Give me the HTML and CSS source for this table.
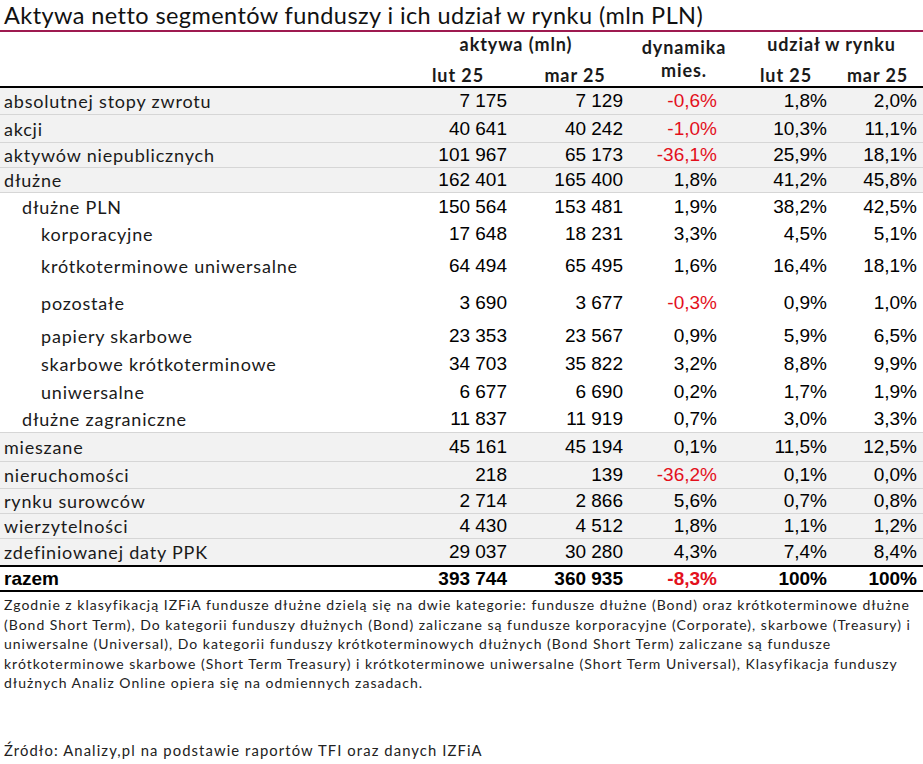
FILE: index.html
```html
<!DOCTYPE html>
<html lang="pl">
<head>
<meta charset="utf-8">
<title>Aktywa netto segmentów funduszy</title>
<link rel="stylesheet" href="styles.css">
</head>
<body>
<div class="page">
  <h1 class="title">Aktywa netto segmentów funduszy i ich udział w rynku (mln PLN)</h1>

  <div class="head">
    <div class="h-empty"></div>
    <div class="h-group h-akt">aktywa (mln)</div>
    <div class="h-dyn">dynamika<br>mies.</div>
    <div class="h-group h-udz">udział w rynku</div>
    <div class="h-sub h-lut1">lut 25</div>
    <div class="h-sub h-mar1">mar 25</div>
    <div class="h-sub h-lut2">lut 25</div>
    <div class="h-sub h-mar2">mar 25</div>
  </div>

  <div class="row grey h27"><div class="lbl">absolutnej stopy zwrotu</div><div class="c1">7 175</div><div class="c2">7 129</div><div class="c3 neg">-0,6%</div><div class="c4">1,8%</div><div class="c5">2,0%</div></div>
  <div class="row grey h28"><div class="lbl">akcji</div><div class="c1">40 641</div><div class="c2">40 242</div><div class="c3 neg">-1,0%</div><div class="c4">10,3%</div><div class="c5">11,1%</div></div>
  <div class="row grey h25"><div class="lbl">aktywów niepublicznych</div><div class="c1">101 967</div><div class="c2">65 173</div><div class="c3 neg">-36,1%</div><div class="c4">25,9%</div><div class="c5">18,1%</div></div>
  <div class="row grey h25"><div class="lbl">dłużne</div><div class="c1">162 401</div><div class="c2">165 400</div><div class="c3">1,8%</div><div class="c4">41,2%</div><div class="c5">45,8%</div></div>
  <div class="row h27"><div class="lbl ind1">dłużne PLN</div><div class="c1">150 564</div><div class="c2">153 481</div><div class="c3">1,9%</div><div class="c4">38,2%</div><div class="c5">42,5%</div></div>
  <div class="row h28"><div class="lbl ind2">korporacyjne</div><div class="c1">17 648</div><div class="c2">18 231</div><div class="c3">3,3%</div><div class="c4">4,5%</div><div class="c5">5,1%</div></div>
  <div class="row h36"><div class="lbl ind2">krótkoterminowe uniwersalne</div><div class="c1">64 494</div><div class="c2">65 495</div><div class="c3">1,6%</div><div class="c4">16,4%</div><div class="c5">18,1%</div></div>
  <div class="row h38"><div class="lbl ind2">pozostałe</div><div class="c1">3 690</div><div class="c2">3 677</div><div class="c3 neg">-0,3%</div><div class="c4">0,9%</div><div class="c5">1,0%</div></div>
  <div class="row h28"><div class="lbl ind2">papiery skarbowe</div><div class="c1">23 353</div><div class="c2">23 567</div><div class="c3">0,9%</div><div class="c4">5,9%</div><div class="c5">6,5%</div></div>
  <div class="row h28"><div class="lbl ind2">skarbowe krótkoterminowe</div><div class="c1">34 703</div><div class="c2">35 822</div><div class="c3">3,2%</div><div class="c4">8,8%</div><div class="c5">9,9%</div></div>
  <div class="row h28"><div class="lbl ind2">uniwersalne</div><div class="c1">6 677</div><div class="c2">6 690</div><div class="c3">0,2%</div><div class="c4">1,7%</div><div class="c5">1,9%</div></div>
  <div class="row h27 last-white"><div class="lbl ind1">dłużne zagraniczne</div><div class="c1">11 837</div><div class="c2">11 919</div><div class="c3">0,7%</div><div class="c4">3,0%</div><div class="c5">3,3%</div></div>
  <div class="row grey h29"><div class="lbl">mieszane</div><div class="c1">45 161</div><div class="c2">45 194</div><div class="c3">0,1%</div><div class="c4">11,5%</div><div class="c5">12,5%</div></div>
  <div class="row grey h27"><div class="lbl">nieruchomości</div><div class="c1">218</div><div class="c2">139</div><div class="c3 neg">-36,2%</div><div class="c4">0,1%</div><div class="c5">0,0%</div></div>
  <div class="row grey h25"><div class="lbl">rynku surowców</div><div class="c1">2 714</div><div class="c2">2 866</div><div class="c3">5,6%</div><div class="c4">0,7%</div><div class="c5">0,8%</div></div>
  <div class="row grey h25"><div class="lbl">wierzytelności</div><div class="c1">4 430</div><div class="c2">4 512</div><div class="c3">1,8%</div><div class="c4">1,1%</div><div class="c5">1,2%</div></div>
  <div class="row grey h26 no-border"><div class="lbl">zdefiniowanej daty PPK</div><div class="c1">29 037</div><div class="c2">30 280</div><div class="c3">4,3%</div><div class="c4">7,4%</div><div class="c5">8,4%</div></div>
  <div class="row total"><div class="lbl">razem</div><div class="c1">393 744</div><div class="c2">360 935</div><div class="c3 neg">-8,3%</div><div class="c4">100%</div><div class="c5">100%</div></div>

  <p class="note">Zgodnie z klasyfikacją IZFiA fundusze dłużne dzielą się na dwie kategorie: fundusze dłużne (Bond) oraz krótkoterminowe dłużne<br>(Bond Short Term), Do kategorii funduszy dłużnych (Bond) zaliczane są fundusze korporacyjne (Corporate), skarbowe (Treasury) i<br>uniwersalne (Universal), Do kategorii funduszy krótkoterminowych dłużnych (Bond Short Term) zaliczane są fundusze<br>krótkoterminowe skarbowe (Short Term Treasury) i krótkoterminowe uniwersalne (Short Term Universal), Klasyfikacja funduszy<br>dłużnych Analiz Online opiera się na odmiennych zasadach.</p>

  <p class="source">Źródło: Analizy,pl na podstawie raportów TFI oraz danych IZFiA</p>
</div>
</body>
</html>
```

FILE: styles.css
```css
* { box-sizing: border-box; }

html, body {
  margin: 0;
  padding: 0;
  background: #ffffff;
}

.page {
  width: 923px;
  font-family: "Lato", "Liberation Sans", sans-serif;
  color: #1a1a1a;
}

.title {
  margin: 0;
  height: 32px;
  padding: 2px 0 0 4px;
  font-size: 23.5px;
  letter-spacing: 0.42px;
  font-weight: 400;
  line-height: 26px;
  color: #111;
  white-space: nowrap;
  border-bottom: 2px solid #9e1a50;
}

.head {
  display: grid;
  grid-template-columns: 404px 108px 116px 112px 92px 91px;
  grid-template-rows: 27px 27px;
  height: 56px;
  border-bottom: 2px solid #000;
  font-weight: 700;
  font-size: 18px;
  letter-spacing: 0.9px;
  color: #1a1a1a;
}

.h-empty { grid-column: 1; grid-row: 1 / span 2; }
.h-akt { grid-column: 2 / span 2; grid-row: 1; }
.h-udz { grid-column: 5 / span 2; grid-row: 1; }
.h-dyn {
  grid-column: 4;
  grid-row: 1 / span 2;
  text-align: center;
  line-height: 23px;
  padding-top: 4px;
}
.h-group {
  text-align: center;
  line-height: 24px;
}
.h-sub {
  text-align: center;
  line-height: 32px;
}
.h-lut1 { grid-column: 2; grid-row: 2; }
.h-mar1 { grid-column: 3; grid-row: 2; padding-left: 10px; }
.h-lut2 { grid-column: 5; grid-row: 2; }
.h-mar2 { grid-column: 6; grid-row: 2; }

.row {
  display: grid;
  grid-template-columns: 404px 108px 116px 112px 92px 91px;
  align-items: center;
  font-family: "Liberation Sans", Arial, sans-serif;
  font-size: 19px;
  color: #000;
}

.row.grey {
  background: #f2f2f2;
  border-bottom: 1px solid #d6d6d6;
}
.row.grey.no-border { border-bottom: none; }
.row.last-white { border-bottom: 1px solid #d6d6d6; }

.h25 { height: 25px; }
.h26 { height: 26px; }
.h27 { height: 27px; }
.h28 { height: 28px; }
.h29 { height: 29px; }
.h36 { height: 36px; }
.h38 { height: 38px; }

.lbl {
  font-family: "Lato", "Liberation Sans", sans-serif;
  font-size: 18px;
  letter-spacing: 0.8px;
  color: #1a1a1a;
  padding-left: 4px;
  white-space: nowrap;
}
.lbl.ind1 { padding-left: 22px; }
.lbl.ind2 { padding-left: 41px; }

.c1, .c2, .c3, .c4, .c5 { text-align: right; white-space: nowrap; }
.c1 { grid-column: 2; padding-right: 5px; }
.c2 { grid-column: 3; padding-right: 5px; }
.c3 { grid-column: 4; padding-right: 23px; }
.c4 { grid-column: 5; padding-right: 5px; }
.c5 { grid-column: 6; padding-right: 6px; }

.neg { color: #e3101c; }

.row.total {
  height: 27px;
  border-top: 2px solid #000;
  border-bottom: 2px solid #000;
  font-weight: 700;
  background: #fff;
}
.row.total .lbl {
  font-family: "Liberation Sans", Arial, sans-serif;
  font-weight: 700;
  font-size: 19px;
  letter-spacing: 0;
  color: #000;
}

.note {
  margin: 0;
  padding: 3px 4px 0 4px;
  font-size: 14px;
  letter-spacing: 1px;
  line-height: 19.5px;
  color: #222;
  white-space: nowrap;
}

.source {
  margin: 47px 0 0 0;
  padding-left: 4px;
  font-size: 14.8px;
  letter-spacing: 1.1px;
  line-height: 20px;
  color: #222;
}
```
